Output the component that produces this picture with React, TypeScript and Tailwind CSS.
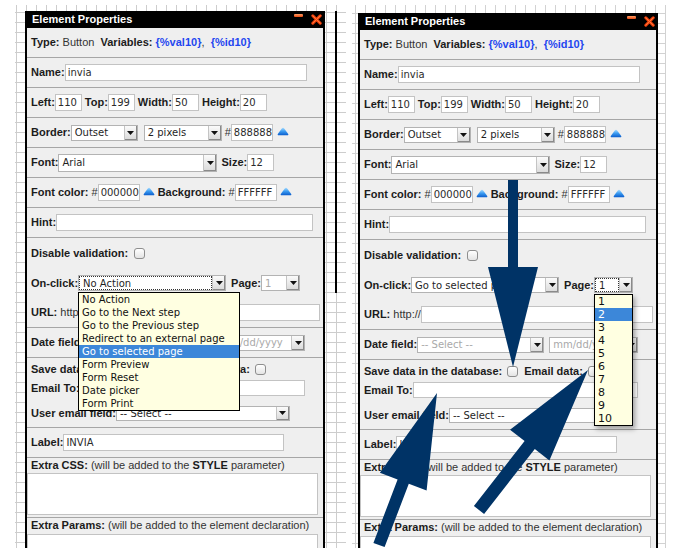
import React from 'react';

type Side = 'left' | 'right';

const lbl = 'font-bold text-[#1c1c1c] whitespace-nowrap';
const ctlFont = "font-['DejaVu_Sans',sans-serif] text-[10px]";

const actions = [
  'No Action',
  'Go to the Next step',
  'Go to the Previous step',
  'Redirect to an external page',
  'Go to selected page',
  'Form Preview',
  'Form Reset',
  'Date picker',
  'Form Print',
];

const pages = ['1', '2', '3', '4', '5', '6', '7', '8', '9', '10'];

function Field({ w, value = '', h = 'h-[17px]' }: { w: string; value?: string; h?: string }) {
  return (
    <div
      className={`${w} ${h} shrink-0 flex items-center border border-[#c3c3c3] bg-white pl-[2px] overflow-hidden whitespace-nowrap text-[#2b2b2b] ${ctlFont}`}
    >
      {value}
    </div>
  );
}

function SelectBtn() {
  return (
    <div className="w-[13px] h-full shrink-0 flex items-center justify-center bg-[linear-gradient(#fbfbfb,#d9d9d9)] border-l border-[#c4c4c4] shadow-[inset_-1px_-1px_0_#8a8a8a]">
      <svg width="7" height="4" viewBox="0 0 7 4">
        <path d="M0 0h7L3.5 4z" fill="#111" />
      </svg>
    </div>
  );
}

function Select({
  w,
  value,
  h = 'h-4',
  muted,
  focus,
}: {
  w: string;
  value: string;
  h?: string;
  muted?: boolean;
  focus?: boolean;
}) {
  return (
    <div className={`${w} ${h} shrink-0 flex border border-[#b3b3b3] bg-white`}>
      <div
        className={`flex-1 min-w-0 flex items-center pl-[3px] whitespace-nowrap overflow-hidden ${ctlFont} ${
          muted ? 'text-[#a9a9a9]' : 'text-[#1f1f1f]'
        } ${focus ? 'border border-dotted border-[#333]' : ''}`}
      >
        {value}
      </div>
      <SelectBtn />
    </div>
  );
}

function Check({ className = '' }: { className?: string }) {
  return (
    <div
      className={`w-[11px] h-[11px] shrink-0 rounded-[3px] border border-[#8e8e8e] bg-[linear-gradient(#ffffff,#e4e4e4)] ${className}`}
    />
  );
}

function BlueUp({ id, className = '' }: { id: string; className?: string }) {
  return (
    <svg className={`shrink-0 ${className}`} width="12" height="9" viewBox="0 0 12 9">
      <defs>
        <linearGradient id={id} x1="0" y1="0" x2="0" y2="1">
          <stop offset="0" stopColor="#a8dbff" />
          <stop offset="0.45" stopColor="#3d9df2" />
          <stop offset="1" stopColor="#0a5ccc" />
        </linearGradient>
      </defs>
      <path
        d="M6 0.8C6.6 0.8 7 1.2 7.4 1.7L11.2 7C11.6 7.6 11.3 8.3 10.5 8.3H1.5C0.7 8.3 0.4 7.6 0.8 7L4.6 1.7C5 1.2 5.4 0.8 6 0.8Z"
        fill={`url(#${id})`}
      />
    </svg>
  );
}

// rows are 30px high including the 1px divider
function Row({ children, h = 'h-[30px]' }: { children: React.ReactNode; h?: string }) {
  return <div className={`${h} border-b border-[#a6a6a6] flex items-center pl-[4px]`}>{children}</div>;
}

function OnClickList() {
  return (
    <div className="absolute left-0 top-[calc(100%+1px)] z-20 w-[162px] border border-black bg-[#ffffe1]">
      {actions.map((a) => (
        <div
          key={a}
          className={`h-[13px] leading-[13px] pl-[3px] whitespace-nowrap ${ctlFont} ${
            a === 'Go to selected page' ? 'bg-[#3c87d9] text-white' : 'text-[#111]'
          }`}
        >
          {a}
        </div>
      ))}
    </div>
  );
}

function PageList() {
  return (
    <div className="absolute left-0 top-[calc(100%+1px)] z-20 w-[39px] border border-black bg-[#ffffe1] shadow-[2px_3px_5px_rgba(0,0,0,0.35)]">
      {pages.map((p) => (
        <div
          key={p}
          className={`h-[13px] leading-[13px] pl-[3px] font-['DejaVu_Sans',sans-serif] text-[11px] ${
            p === '2' ? 'bg-[#3c87d9] text-white' : 'text-[#111]'
          }`}
        >
          {p}
        </div>
      ))}
    </div>
  );
}

function Panel({ side }: { side: Side }) {
  const right = side === 'right';
  return (
    <div className="w-[300px] shrink-0 border-x-2 border-black bg-[#efefef] text-[11px] text-[#333]">
      <div className="h-[17px] bg-black flex items-start">
        <span className="pl-[5px] leading-[17px] font-bold text-white">Element Properties</span>
        <div className="ml-auto flex items-start pr-px">
          <div className="mt-[3px] w-[9px] h-[3px] rounded-[1px] bg-[linear-gradient(#ffa066,#ec4a12)]" />
          <svg className="ml-[8px] mt-[3px]" width="11" height="11" viewBox="0 0 11 11">
            <path
              d="M1.8 1.8 9.2 9.2M9.2 1.8 1.8 9.2"
              stroke="#f2410c"
              strokeWidth="3"
              strokeLinecap="round"
            />
            <path d="M1.8 1.8 9.2 9.2M9.2 1.8 1.8 9.2" stroke="#ff7a3c" strokeWidth="1" strokeLinecap="round" />
          </svg>
        </div>
      </div>

      <Row>
        <span className="whitespace-pre">
          <b className="text-[#1c1c1c]">Type:</b> Button{'  '}
          <b className="text-[#1c1c1c]">Variables:</b> <b className="text-[#1f47ef]">{'{%val10}'}</b>,{'  '}
          <b className="text-[#1f47ef]">{'{%id10}'}</b>
        </span>
      </Row>

      <Row>
        <span className={lbl}>Name:</span>
        <Field w="w-[242px]" value="invia" />
      </Row>

      <Row>
        <span className={lbl}>Left:</span>
        <Field w="w-[27px]" value="110" />
        <span className={`${lbl} ml-[3px]`}>Top:</span>
        <Field w="w-[27px]" value="199" />
        <span className={`${lbl} ml-[3px]`}>Width:</span>
        <Field w="w-[27px]" value="50" />
        <span className={`${lbl} ml-[3px]`}>Height:</span>
        <Field w="w-[27px]" value="20" />
      </Row>

      <Row>
        <span className={lbl}>Border:</span>
        <Select w="w-[67px]" value="Outset" />
        <div className="ml-[6px]">
          <Select w="w-[78px]" value="2 pixels" />
        </div>
        <span className="ml-[3px]">#</span>
        <Field w="w-[42px]" value="888888" />
        <BlueUp id={`${side}-b1`} className="ml-[4px] -mt-[2px]" />
      </Row>

      <Row>
        <span className={lbl}>Font:</span>
        <Select w="w-[159px]" h="h-[18px]" value="Arial" />
        <span className={`${lbl} ml-[4px]`}>Size:</span>
        <Field w="w-[27px]" value="12" />
      </Row>

      <Row>
        <span className="whitespace-pre">
          <b className="text-[#1c1c1c]">Font color: </b>#
        </span>
        <Field w="w-[42px]" value="000000" />
        <BlueUp id={`${side}-b2`} className="ml-[3px] -mt-[2px]" />
        <span className="whitespace-pre ml-[3px]">
          <b className="text-[#1c1c1c]">Background: </b>#
        </span>
        <Field w="w-[42px]" value="FFFFFF" />
        <BlueUp id={`${side}-b3`} className="ml-[3px] -mt-[2px]" />
      </Row>

      <Row>
        <span className={lbl}>Hint:</span>
        <Field w="w-[257px]" />
      </Row>

      <div className="h-[90px] border-b border-[#a6a6a6] flex flex-col pl-[4px]">
        <div className="h-[30px] flex items-center">
          <span className={lbl}>Disable validation:</span>
          <Check className="ml-[6px]" />
        </div>
        <div className="h-[30px] flex items-center">
          <span className={lbl}>On-click:</span>
          <div className="relative">
            <Select w="w-[148px]" value={right ? 'Go to selected page' : 'No Action'} focus={!right} />
            {!right && <OnClickList />}
          </div>
          <span className={`${lbl} ml-[5px]`}>Page:</span>
          <div className="relative">
            <Select w="w-[39px]" value="1" muted={!right} focus={right} />
            {right && <PageList />}
          </div>
        </div>
        <div className="h-[29px] flex items-center">
          <span className="whitespace-pre">
            <b className="text-[#1c1c1c]">URL:</b> http://
          </span>
          <Field w="w-[232px]" />
        </div>
      </div>

      <Row>
        <span className={lbl}>Date field:</span>
        <Select w="w-[127px]" value="-- Select --" muted />
        <div className="ml-[5px]">
          <Select w="w-[89px]" value="mm/dd/yyyy" muted />
        </div>
      </Row>

      <div className="h-[70px] border-b border-[#a6a6a6] flex flex-col pl-[4px] pt-[3px]">
        <div className="h-4 flex items-center">
          <span className={lbl}>Save data in the database:</span>
          <Check className="ml-[5px]" />
          <span className={`${lbl} ml-[6px]`}>Email data:</span>
          <Check className="ml-[5px]" />
        </div>
        <div className="h-4 mt-[3px] flex items-center">
          <span className={lbl}>Email To:</span>
          <Field w="w-[225px]" h="h-4" />
        </div>
        <div className="h-4 mt-[9px] flex items-center">
          <span className={lbl}>User email field:</span>
          <Select w="w-[174px]" h="h-[15px]" value="-- Select --" />
        </div>
      </div>

      <Row>
        <span className={lbl}>Label:</span>
        <Field w="w-[221px]" value="INVIA" />
      </Row>

      <div className="h-[60px] border-b border-[#a6a6a6] flex flex-col">
        <div className="h-[14px] leading-[14px] pl-[4px] whitespace-pre">
          <b className="text-[#1c1c1c]">Extra CSS:</b> (will be added to the <b className="text-[#1c1c1c]">STYLE</b>{' '}
          parameter)
        </div>
        <div className="mt-px h-[42px] w-[291px] border border-[#c3c3c3] bg-white" />
      </div>

      <div className="flex flex-col">
        <div className="h-[14px] leading-[14px] pl-[4px] whitespace-pre">
          <b className="text-[#1c1c1c]">Extra Params:</b> (will be added to the element declaration)
        </div>
        <div className="mt-[2px] h-[60px] w-[291px] border border-[#c3c3c3] bg-white" />
      </div>
    </div>
  );
}

function Arrows() {
  return (
    <svg
      className="absolute left-0 top-0 z-30 pointer-events-none"
      width="700"
      height="548"
      viewBox="0 0 700 548"
    >
      <polygon fill="#003366" points="508,180 518,180 518,267 538,267 513,367 488,267 508,267" />
      <polygon
        fill="#003366"
        points="373.4,542.9 397.6,479.6 379.9,472.8 437,393 426.6,490.6 408.8,483.8 384.6,547.1"
      />
      <polygon
        fill="#003366"
        points="473.9,506 524.6,441 510,429.7 588,370 549.4,460.4 534.8,449 484.1,514"
      />
    </svg>
  );
}

export default function App() {
  return (
    <div className="relative w-[700px] h-[548px] overflow-hidden bg-white font-['Liberation_Sans',Arial,sans-serif] flex items-start">
      <div className="ml-[15px] mt-[5px] w-[331px] h-[543px] shrink-0 overflow-hidden flex items-start bg-[linear-gradient(to_right,#cdcdcd_1px,transparent_1px),linear-gradient(to_bottom,#cdcdcd_1px,transparent_1px)] bg-[size:10px_10px] bg-[position:1px_7px]">
        <div className="ml-[10px] mt-[6px]">
          <Panel side="left" />
        </div>
        <div className="ml-[10px] mt-[6px] w-[2px] h-[282px] bg-black" />
      </div>
      <div className="ml-[6px] mt-[5px] w-[314px] h-[543px] shrink-0 overflow-hidden flex items-start bg-[linear-gradient(to_right,#d2d2d2_1px,transparent_1px),linear-gradient(to_bottom,#d2d2d2_1px,transparent_1px)] bg-[size:10px_10px] bg-[position:3px_8px]">
        <div className="ml-[6px] mt-[8px]">
          <Panel side="right" />
        </div>
      </div>
      <Arrows />
    </div>
  );
}
